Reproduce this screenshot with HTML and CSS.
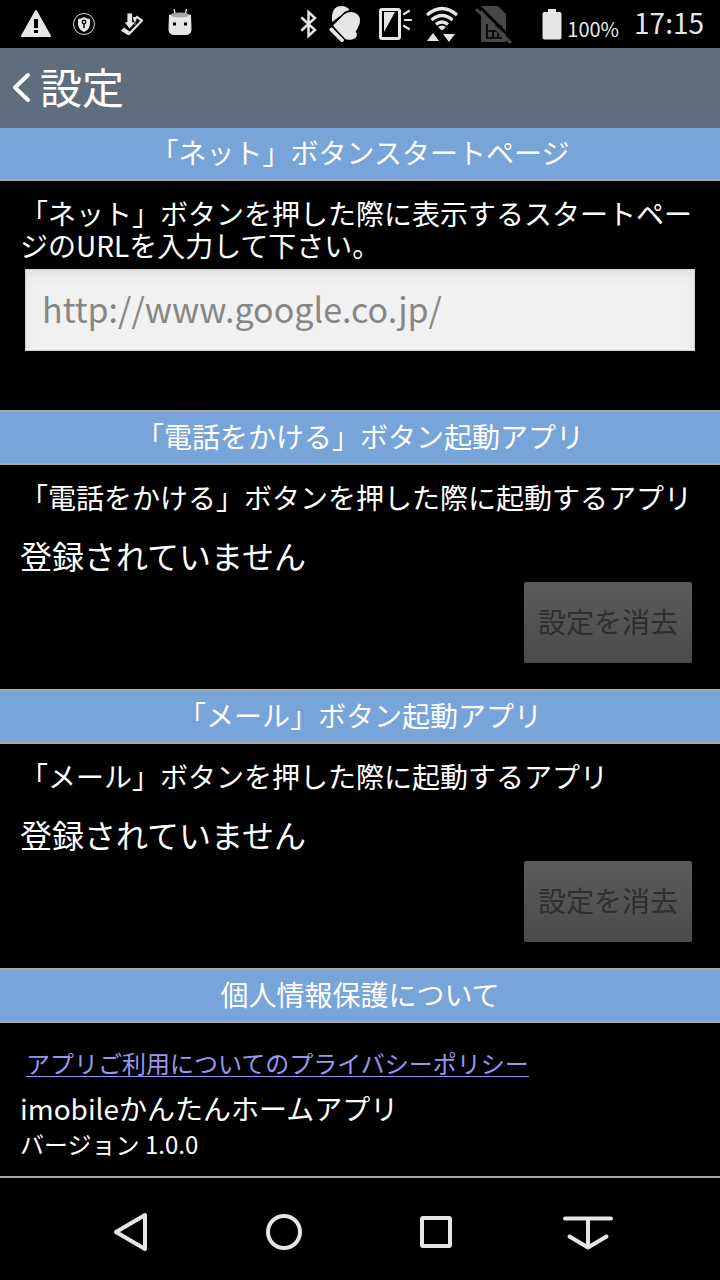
FILE: index.html
```html
<!DOCTYPE html>
<html lang="ja">
<head>
    <meta charset="UTF-8">
    <meta name="viewport" content="width=device-width, initial-scale=1.0">
    <title>設定</title>
    <link rel="stylesheet" href="styles.css">
</head>
<body>
    <div class="status-bar">
        <div class="notifications">
            <svg width="48" height="48" viewBox="12 0 48 48">
                <path d="M36 11 50 36H22z" fill="#e6e6e6" stroke="#e6e6e6" stroke-width="2" stroke-linejoin="round"/>
                <path d="M34 19h4v9h-4zM34 30h4v3h-4z" fill="#000"/>
            </svg>
            <svg width="48" height="48" viewBox="60 0 48 48">
                <circle cx="84" cy="24" r="10.500" fill="none" stroke="#d5d5d5"/>
                <path d="M84 17q3 2 6 2v5q0 5-6 8-6-3-6-8v-5q3 0 6-2z" fill="#e6e6e6"/>
                <path d="M84 24v4" stroke="#000" stroke-width="1.5"/>
                <circle cx="84" cy="22" r="1.8" fill="#e6e6e6" stroke="#000" stroke-width="1.3"/>
            </svg>
            <svg width="48" height="48" viewBox="108 0 48 48">
                <path d="M136 16.500 142 20.500 129 34 122 30" fill="none" stroke="#e6e6e6" stroke-width="2.200" stroke-linejoin="round"/>
                <path d="M121 30.500l3-3 7 5-3 2.500z" fill="#e6e6e6"/>
                <path d="M133 17l4 0-2 9z" fill="#e6e6e6"/>
                <path d="M127 13h5.500v9h3.500l-6.500 7-5.500-7h3z" fill="#e6e6e6" stroke="#000" stroke-width=".8"/>
            </svg>
            <svg width="48" height="48" viewBox="156 0 48 48">
                <path d="M174 9l1.500 6M186.500 9l-1.500 6" stroke="#e6e6e6" stroke-width="1.300"/>
                <path d="M169 15q11-4 22 0l.5 14q0 6-6 6h-11q-6 0-6-6z" fill="#e6e6e6"/>
                <ellipse cx="180" cy="15" rx="9" ry="2.500" fill="#a9a9a9"/>
                <path d="M173 22.500h3v3h-3zM184 22.500h3v3h-3z" fill="#000"/>
            </svg>
        </div>
        <div class="indicators">
            <svg width="24" height="48" viewBox="296 0 24 48">
                <path d="M301 18l13 12-6.500 6V12l6.500 6-13 12" fill="none" stroke="#e6e6e6" stroke-width="2.500" stroke-linecap="round"/>
            </svg>
            <svg width="48" height="48" viewBox="320 0 48 48">
                <path d="M331 22v-6q1-10 9-10 6 0 8.500 4-5 1-8 5z" fill="#e6e6e6"/>
                <path d="M332 25.500 343 14.500q5-3.500 10-2 6 2 6 8 0 4-2 7l-2.500 4.500 1.500 1.500q0 5-5 6-4 1-8-1z" fill="#e6e6e6"/>
                <path d="M330.500 29.500 341 40" stroke="#e6e6e6" stroke-width="4" stroke-linecap="round"/>
                <path d="M333 28.500 344 39.500" stroke="#000" stroke-width="1.200"/>
            </svg>
            <svg width="48" height="48" viewBox="368 0 48 48">
                <rect x="379.500" y="9.500" width="19" height="29" rx="1.500" fill="none" stroke="#e6e6e6" stroke-width="3"/>
                <path d="M383 12h11l-11 20z" fill="#e6e6e6"/>
                <path d="M403 14l5-3M404 20h6M403 26l5 3" stroke="#e6e6e6" stroke-width="2.200" stroke-linecap="round"/>
            </svg>
            <svg width="48" height="48" viewBox="416 0 48 48">
                <path d="M426 15q15-13 30 0M430.500 20q10.500-9 21 0M435 24.500q6-5 12 0" fill="none" stroke="#e6e6e6" stroke-width="3.200"/>
                <path d="M437 27q4-3 8 0l-4 3.500zM426 41l6-8 6 8zM442 34h12l-6 8z" fill="#e6e6e6"/>
            </svg>
            <svg width="72" height="48" viewBox="464 0 72 48">
                <path d="M480 6h17l8 8v28h-25z" fill="#484848"/>
                <path d="M486 24v14h15M486 31h14M492 31v7M497 25v13M493 26h8" fill="none" stroke="#000" stroke-width="1.600"/>
                <path d="M478 6 512 40" stroke="#000" stroke-width="3"/>
                <path d="M475 9 510 43" stroke="#484848" stroke-width="3"/>
            </svg>
            <svg width="30" height="48" viewBox="536 0 30 48">
                <path d="M547 9h8v3h3.500q2 0 2 2v23.500q0 2-2 2h-15q-2 0-2-2V14q0-2 2-2h3.500z" fill="#e6e6e6"/>
            </svg>
            <span class="battery">100%</span>
            <span class="clock">17:15</span>
        </div>
    </div>

    <header class="app-bar">
        <button class="back" type="button" aria-label="戻る">
            <svg width="20" height="32" viewBox="0 0 20 32">
                <path d="M16 3 3 15.500l13 12.500" fill="none" stroke="#fff" stroke-width="4" stroke-linecap="round" stroke-linejoin="round"/>
            </svg>
        </button>
        <h1>設定</h1>
    </header>

    <main>
        <section>
            <h2>「ネット」ボタンスタートページ</h2>
            <div class="content url">
                <label for="start-url">「ネット」ボタンを押した際に表示するスタートページのURLを入力して下さい。</label>
                <input id="start-url" type="text" placeholder="http://www.google.co.jp/">
            </div>
        </section>

        <section>
            <h2>「電話をかける」ボタン起動アプリ</h2>
            <div class="content">
                <p>「電話をかける」ボタンを押した際に起動するアプリ</p>
                <p class="registered">登録されていません</p>
                <button class="clear" type="button" disabled>設定を消去</button>
            </div>
        </section>

        <section>
            <h2>「メール」ボタン起動アプリ</h2>
            <div class="content">
                <p>「メール」ボタンを押した際に起動するアプリ</p>
                <p class="registered">登録されていません</p>
                <button class="clear" type="button" disabled>設定を消去</button>
            </div>
        </section>

        <section>
            <h2>個人情報保護について</h2>
            <div class="content about">
                <a href="#">アプリご利用についてのプライバシーポリシー</a>
                <p>imobileかんたんホームアプリ</p>
                <p class="version">バージョン 1.0.0</p>
            </div>
        </section>
    </main>

    <nav class="nav-bar">
        <button type="button" aria-label="戻る">
            <svg width="56" height="48" viewBox="0 0 56 48">
                <path d="M42 7v34L13 24z" transform="translate(-1 0)" fill="none" stroke="#e6e6e6" stroke-width="4" stroke-linejoin="round"/>
            </svg>
        </button>
        <button type="button" aria-label="ホーム">
            <svg width="56" height="48" viewBox="0 0 56 48">
                <circle cx="28" cy="24" r="16" fill="none" stroke="#e6e6e6" stroke-width="4"/>
            </svg>
        </button>
        <button type="button" aria-label="履歴">
            <svg width="56" height="48" viewBox="0 0 56 48">
                <rect x="14" y="10" width="28" height="28" rx="1" fill="none" stroke="#e6e6e6" stroke-width="4"/>
            </svg>
        </button>
        <button type="button" aria-label="隠す">
            <svg width="56" height="48" viewBox="0 0 56 48">
                <path d="M5 10.500h46M28 10.500V39M9.500 28.500 28 39.500l18.500-11" fill="none" stroke="#e6e6e6" stroke-width="4" stroke-linecap="round" stroke-linejoin="round"/>
            </svg>
        </button>
    </nav>
</body>
</html>
```
FILE: styles.css
```css
* {
    box-sizing: border-box;
}

body {
    background-color: #000;
    color: #fff;
    font-family: "Noto Sans CJK JP", sans-serif;
    font-size: 28px;
    line-height: 32px;
    margin: 0;
    text-spacing-trim: space-all;
}

h1,
h2,
p {
    margin: 0;
    font-weight: 400;
}

svg {
    display: block;
}

button {
    background: none;
    border: 0;
    padding: 0;
    font-family: inherit;
}

.status-bar {
    display: flex;
    justify-content: space-between;
    height: 48px;
    padding: 0 16px 0 12px;
    color: #e6e6e6;
}

.notifications,
.indicators {
    display: flex;
    align-items: center;
}

.battery {
    font-size: 20px;
    padding-top: 10px;
}

.clock {
    font-size: 28px;
    margin-left: 15px;
    padding-bottom: 4px;
}

.app-bar {
    display: flex;
    align-items: center;
    gap: 8px;
    height: 80px;
    padding-left: 12px;
    background-color: #5f6e7f;
}

h1 {
    font-size: 42px;
    line-height: 48px;
    padding-bottom: 4px;
}

h2 {
    background-color: #77a4d9;
    border-top: 2px solid #a6a8ad;
    border-bottom: 2px solid #a6a8ad;
    font-size: 28px;
    line-height: 49px;
    padding-bottom: 2px;
    text-align: center;
}

section:first-child h2 {
    border-top: 0;
}

main {
    border-bottom: 2px solid #aaa;
}

.content {
    display: flex;
    flex-direction: column;
    padding: 16px 20px 26px;
}

.content.url {
    padding-bottom: 59px;
}

input {
    height: 82px;
    margin: 8px 5px 0;
    padding: 0 16px 4px;
    background-color: #f1f1f1;
    border: 1px solid #ccc;
    border-radius: 0;
    box-shadow: inset 0 6px 10px #e2e2e2;
    color: #333;
    font-family: inherit;
    font-size: 34px;
}

input::placeholder {
    color: #868686;
}

.registered {
    margin-top: 22px;
    font-size: 32px;
    line-height: 40px;
}

.clear {
    align-self: flex-end;
    width: 168px;
    height: 81px;
    margin: 7px 8px 0 0;
    padding-bottom: 4px;
    background: linear-gradient(#5b5b5b, #4b4b4b);
    border-radius: 2px;
    color: #2e2e2e;
    font-size: 28px;
}

.content.about {
    padding-top: 24px;
    padding-bottom: 16px;
}

.about a {
    align-self: flex-start;
    margin: 0 6px 13px;
    color: #9a96f0;
    font-size: 24px;
    text-decoration-thickness: 1px;
    text-underline-offset: 3px;
}

.version {
    margin-top: 4px;
    font-size: 24px;
}

.nav-bar {
    display: flex;
    justify-content: center;
    gap: 96px;
    padding: 30px 0 24px;
}
```
